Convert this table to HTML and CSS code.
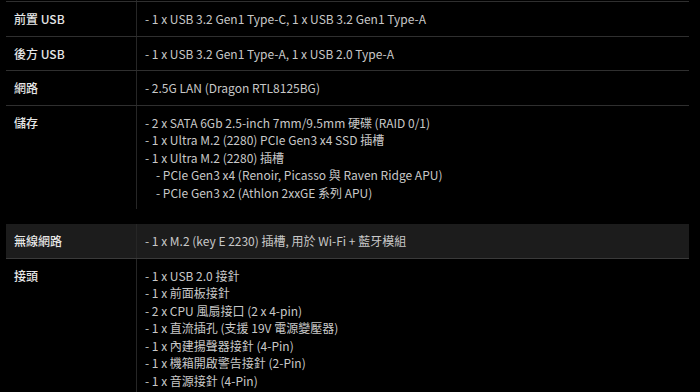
FILE: index.html
```html
<!DOCTYPE html>
<html lang="zh-Hant">
<head>
<meta charset="utf-8">
<link rel="stylesheet" href="styles.css">
</head>
<body>
<div class="page">
  <div class="spec">
    <div class="row stub"><div class="label"></div><div class="value"></div></div>
    <div class="row"><div class="label">前置 USB</div><div class="value"><p>- 1 x USB 3.2 Gen1 Type-C, 1 x USB 3.2 Gen1 Type-A</p></div></div>
    <div class="row"><div class="label">後方 USB</div><div class="value"><p>- 1 x USB 3.2 Gen1 Type-A, 1 x USB 2.0 Type-A</p></div></div>
    <div class="row"><div class="label">網路</div><div class="value"><p>- 2.5G LAN (Dragon RTL8125BG)</p></div></div>
    <div class="row last"><div class="label">儲存</div><div class="value">
      <p>- 2 x SATA 6Gb 2.5-inch 7mm/9.5mm 硬碟 (RAID 0/1)</p>
      <p>- 1 x Ultra M.2 (2280) PCIe Gen3 x4 SSD 插槽</p>
      <p>- 1 x Ultra M.2 (2280) 插槽</p>
      <p class="sub">- PCIe Gen3 x4 (Renoir, Picasso 與 Raven Ridge APU)</p>
      <p class="sub">- PCIe Gen3 x2 (Athlon 2xxGE 系列 APU)</p>
    </div></div>
  </div>
  <div class="spec second">
    <div class="row shaded"><div class="label">無線網路</div><div class="value"><p>- 1 x M.2 (key E 2230) 插槽, 用於 Wi-Fi + 藍牙模組</p></div></div>
    <div class="row"><div class="label">接頭</div><div class="value">
      <p>- 1 x USB 2.0 接針</p>
      <p>- 1 x 前面板接針</p>
      <p>- 2 x CPU 風扇接口 (2 x 4-pin)</p>
      <p>- 1 x 直流插孔 (支援 19V 電源變壓器)</p>
      <p>- 1 x 內建揚聲器接針 (4-Pin)</p>
      <p>- 1 x 機箱開啟警告接針 (2-Pin)</p>
      <p>- 1 x 音源接針 (4-Pin)</p>
    </div></div>
  </div>
</div>
</body>
</html>
```
FILE: styles.css
```css
html, body {
  margin: 0;
  padding: 0;
  background: #000;
  overflow: hidden;
}
body {
  font-family: "Noto Sans CJK TC", "Noto Sans CJK SC", sans-serif;
  font-size: 12px;
  color: #c8c8c8;
}
.page {
  padding: 0 11px 0 6px;
}
.spec {
  display: flex;
  flex-direction: column;
}
.second {
  margin-top: 15px;
}
.row {
  display: grid;
  grid-template-columns: 131px 1fr;
  border-bottom: 1px solid #2f2f2f;
}
.row.last {
  border-bottom: none;
}
.row.stub {
  height: 1px;
  border-bottom: 1px solid #2f2f2f;
}
.row.stub .label, .row.stub .value {
  padding: 0;
}
.row.shaded {
  background: #1c1c1c;
  border-bottom: 1px solid #3a3a3a;
}
.label {
  padding: 8px 8px 8px 8px;
  line-height: 17.5px;
  color: #e6e6e6;
  font-weight: 500;
  border-right: 1px solid #262626;
}
.value {
  padding: 8px 8px;
  line-height: 17.5px;
}
.value p {
  margin: 0;
  white-space: nowrap;
}
.value p.sub {
  padding-left: 11px;
}
```
